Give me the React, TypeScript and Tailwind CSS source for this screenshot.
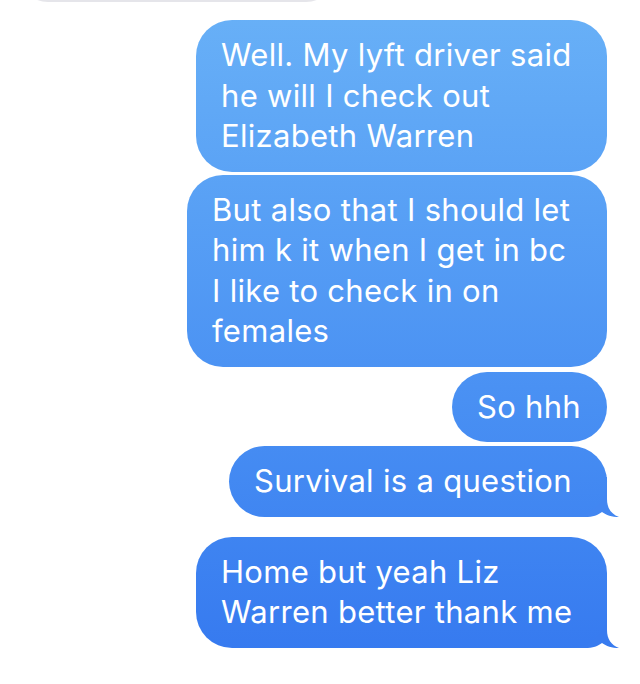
import React from "react";

type Msg = { lines: string[]; width: string; tail?: boolean; tailColor?: string; gap: string };

const MESSAGES: Msg[] = [
    { lines: ["Well. My lyft driver said", "he will I check out", "Elizabeth Warren"], width: "w-[411px]", gap: "mt-[18px]" },
    { lines: ["But also that I should let", "him k it when I get in bc", "I like to check in on", "females"], width: "w-[420px]", gap: "mt-[3px]" },
    { lines: ["So hhh"], width: "w-[155px]", gap: "mt-[5px]" },
    { lines: ["Survival is a question"], width: "w-[378px]", tail: true, tailColor: "#4286f1", gap: "mt-[4px]" },
    { lines: ["Home but yeah Liz", "Warren better thank me"], width: "w-[411px]", tail: true, tailColor: "#387bef", gap: "mt-[20px]" },
];

// iMessage tail, sits over the bottom-right corner of the bubble
function Tail({ color }: { color: string }) {
    return (
        <svg className="absolute right-[-12px] bottom-0" width="48" height="40" viewBox="0 0 48 40">
            <path
                d="M0 0 L36 0 L36 22 C36 31 40 37 48 40 C41 40 35 38 31 35 C27 38 22 40 14 40 L0 40 Z"
                fill={color}
            />
        </svg>
    );
}

function Bubble({ msg }: { msg: Msg }) {
    return (
        <div className={`relative self-end ${msg.gap} ${msg.width}`}>
            <div className="relative z-10 rounded-[36px] bg-linear-to-b from-[#69b1f7] to-[#3477ef] bg-fixed px-[25px] py-[15px] text-[31px] leading-[40.5px] tracking-[0.3px] text-white">
                {msg.lines.map((l, i) => (
                    <div key={i} className="whitespace-nowrap">{l}</div>
                ))}
            </div>
            {msg.tail && <Tail color={msg.tailColor!} />}
        </div>
    );
}

export default function App() {
    return (
        <div className="relative w-[640px] h-[684px] overflow-hidden bg-white font-['Inter',sans-serif]">
            {/* previous incoming bubble, mostly scrolled off */}
            <div className="ml-[18px] -mt-[58px] h-[60px] w-[318px] rounded-[30px] bg-[#e5e5ea]" />
            <div className="flex flex-col pr-[33px]">
                {MESSAGES.map((m, i) => (
                    <Bubble key={i} msg={m} />
                ))}
            </div>
        </div>
    );
}
